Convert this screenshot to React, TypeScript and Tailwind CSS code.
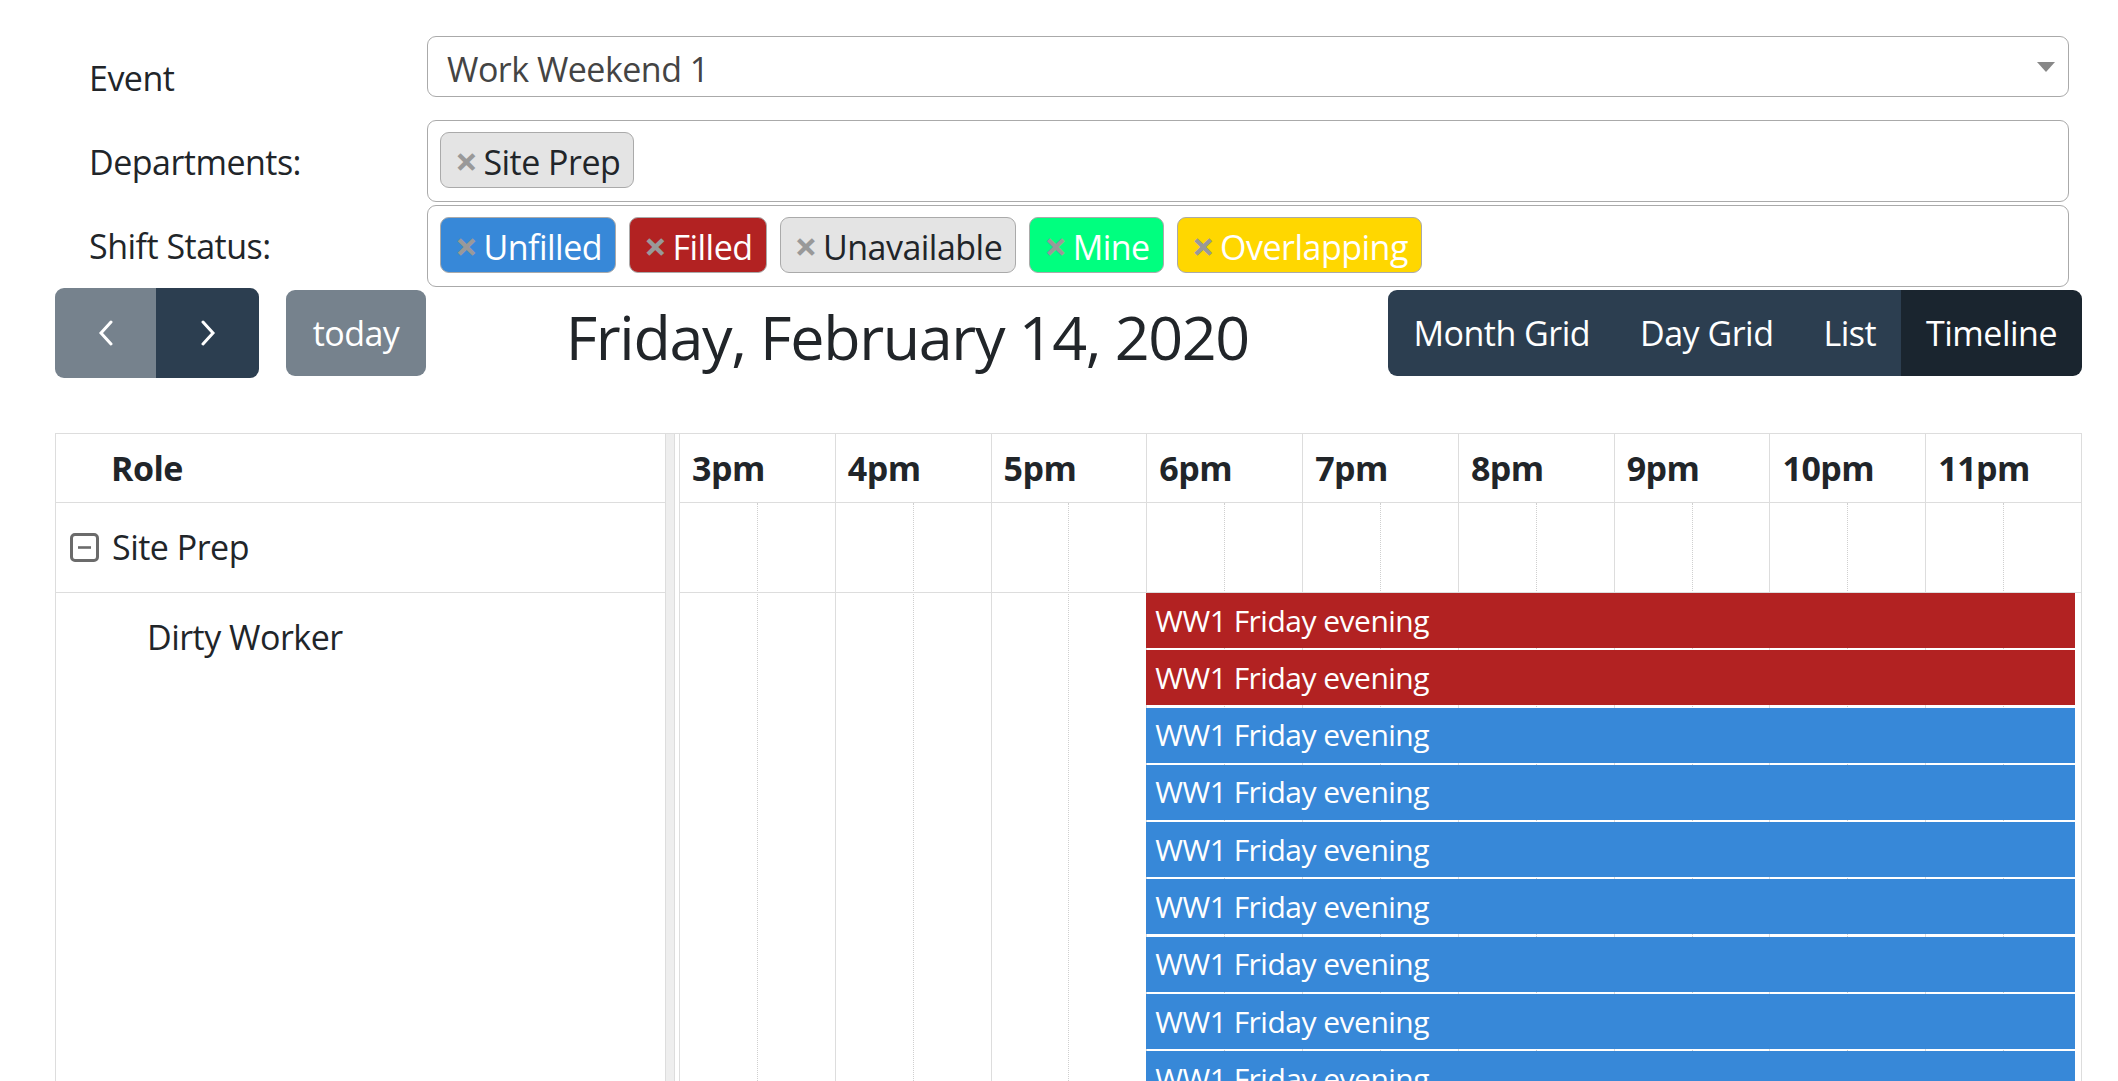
import React from "react";

const tags = [
  { label: "Unfilled", bg: "bg-[#3788d8]", text: "text-white" },
  { label: "Filled", bg: "bg-[#b22222]", text: "text-white" },
  { label: "Unavailable", bg: "bg-[#e4e4e4]", text: "text-[#212529]" },
  { label: "Mine", bg: "bg-[#00ff7f]", text: "text-white" },
  { label: "Overlapping", bg: "bg-[#ffd700]", text: "text-white" },
];

const hours = ["3pm", "4pm", "5pm", "6pm", "7pm", "8pm", "9pm", "10pm", "11pm"];

const events = [
  "bg-[#b22222] border-[#b22222]",
  "bg-[#b22222] border-[#b22222]",
  "bg-[#3788d8] border-[#3788d8]",
  "bg-[#3788d8] border-[#3788d8]",
  "bg-[#3788d8] border-[#3788d8]",
  "bg-[#3788d8] border-[#3788d8]",
  "bg-[#3788d8] border-[#3788d8]",
  "bg-[#3788d8] border-[#3788d8]",
  "bg-[#3788d8] border-[#3788d8]",
  "bg-[#3788d8] border-[#3788d8]",
  "bg-[#3788d8] border-[#3788d8]",
];

function Tag({ label, bg, text }: { label: string; bg: string; text: string }) {
  return (
    <span
      className={`inline-flex items-center h-[56px] rounded-[9px] border border-[#aaa] pl-[14px] pr-[13px] pt-[3px] ${bg} ${text}`}
    >
      <span className="text-[#999] font-bold text-[40px] mr-[6px] leading-none -mt-[2px]">×</span>
      <span className="leading-none">{label}</span>
    </span>
  );
}

function Chevron({ left }: { left?: boolean }) {
  return (
    <svg width="20" height="26" viewBox="0 0 20 26" fill="none">
      <path
        d={left ? "M15 2 L5 13 L15 24" : "M5 2 L15 13 L5 24"}
        stroke="white"
        strokeWidth="3"
        strokeLinecap="round"
        strokeLinejoin="miter"
      />
    </svg>
  );
}

export default function App() {
  return (
    <div className="min-h-screen bg-white text-[#212529] [font-family:'Open_Sans',sans-serif] text-[34px] leading-[1.5] tracking-[-0.015em]">
      {/* Form */}
      <div className="pt-[36px] pl-[89px] pr-[49px]">
        <div className="flex items-start">
          <div className="w-[338px] pt-[25px] leading-none">Event</div>
          <div className="flex-1 h-[61px] border border-[#aaa] rounded-[9px] flex items-center pl-[19px] pr-[13px] pt-[5px] text-[#444]">
            <span className="flex-1 leading-none">Work Weekend 1</span>
            <svg width="18" height="10" viewBox="0 0 18 10" className="-mt-[5px]">
              <path d="M0 0 L18 0 L9 10 Z" fill="#888" />
            </svg>
          </div>
        </div>
        <div className="flex items-start mt-[23px]">
          <div className="w-[338px] pt-[25px] leading-none">Departments:</div>
          <div className="flex-1 h-[82px] border border-[#aaa] rounded-[9px] pl-[12px] pt-[11px]">
            <Tag label="Site Prep" bg="bg-[#e4e4e4]" text="text-[#212529]" />
          </div>
        </div>
        <div className="flex items-start mt-[3px]">
          <div className="w-[338px] pt-[24px] leading-none">Shift Status:</div>
          <div className="flex-1 h-[82px] border border-[#aaa] rounded-[9px] pl-[12px] pt-[11px] flex items-start gap-[13px]">
            {tags.map((t) => (
              <Tag key={t.label} {...t} />
            ))}
          </div>
        </div>
      </div>

      {/* Calendar */}
      <div className="pl-[55px] pr-[36px] mt-[1px]">
        {/* Toolbar */}
        <div className="flex items-center justify-between h-[90px]">
          <div className="flex items-center">
            <div className="flex h-[90px]">
              <div className="w-[101px] bg-[#76828d] rounded-l-[9px] flex items-center justify-center">
                <Chevron left />
              </div>
              <div className="w-[103px] bg-[#2c3e50] rounded-r-[9px] flex items-center justify-center">
                <Chevron />
              </div>
            </div>
            <div className="ml-[27px] h-[86px] w-[140px] bg-[#76828d] rounded-[9px] text-white flex items-center justify-center">
              today
            </div>
          </div>
          <h2 className="text-[61px] leading-[1.2] mt-[8px] tracking-[-0.022em] text-[#212529]">
            Friday, February 14, 2020
          </h2>
          <div className="flex h-[86px] rounded-[9px] overflow-hidden text-white">
            <div className="bg-[#2c3e50] px-[25px] flex items-center">Month Grid</div>
            <div className="bg-[#2c3e50] px-[25px] flex items-center">Day Grid</div>
            <div className="bg-[#2c3e50] px-[25px] flex items-center">List</div>
            <div className="bg-[#1a252f] px-[25px] flex items-center">Timeline</div>
          </div>
        </div>

        {/* Table */}
        <div className="mt-[55px] border border-[#ddd] flex">
          {/* resource area */}
          <div className="w-[609px] flex flex-col">
            <div className="h-[69px] border-b border-[#ddd] flex items-center pl-[55px] font-bold">Role</div>
            <div className="h-[90px] border-b border-[#ddd] flex items-center pl-[14px]">
              <svg width="29" height="29" viewBox="0 0 29 29" className="mr-[13px]">
                <rect x="1.5" y="1.5" width="26" height="26" rx="3.5" fill="none" stroke="#6b6b6b" strokeWidth="3" />
                <line x1="8" y1="14.5" x2="21" y2="14.5" stroke="#6b6b6b" strokeWidth="2.6" />
              </svg>
              <span>Site Prep</span>
            </div>
            <div className="flex-1 pl-[91px] pt-[19px]">Dirty Worker</div>
          </div>
          {/* divider */}
          <div className="w-[10px] border-x border-[#ddd] bg-[#eeeeee]" />
          {/* timeline */}
          <div className="flex-1 pl-[4px] flex flex-col">
            <div className="h-[69px] border-b border-[#ddd] flex">
              {hours.map((h) => (
                <div key={h} className="flex-1 border-l border-[#ddd] flex items-center pl-[12px] font-bold">
                  {h}
                </div>
              ))}
            </div>
            <div className="relative flex-1">
              <div className="absolute inset-0 flex">
                {hours.map((h) => (
                  <div key={h} className="flex-1 border-l border-[#ddd] flex">
                    <div className="flex-1 border-r border-dotted border-[#cfcfcf]" />
                    <div className="flex-1" />
                  </div>
                ))}
              </div>
              <div className="relative">
                <div className="h-[90px] border-b border-[#ddd]" />
                <div className="pl-[33.333%] pr-[6px] pb-[40px]">
                  {events.map((c, i) => (
                    <div
                      key={i}
                      className={`h-[55px] mb-[2.3px] border ${c} text-white text-[30px] leading-none flex items-center pl-[8px]`}
                    >
                      WW1 Friday evening
                    </div>
                  ))}
                </div>
              </div>
            </div>
          </div>
        </div>
      </div>
    </div>
  );
}
